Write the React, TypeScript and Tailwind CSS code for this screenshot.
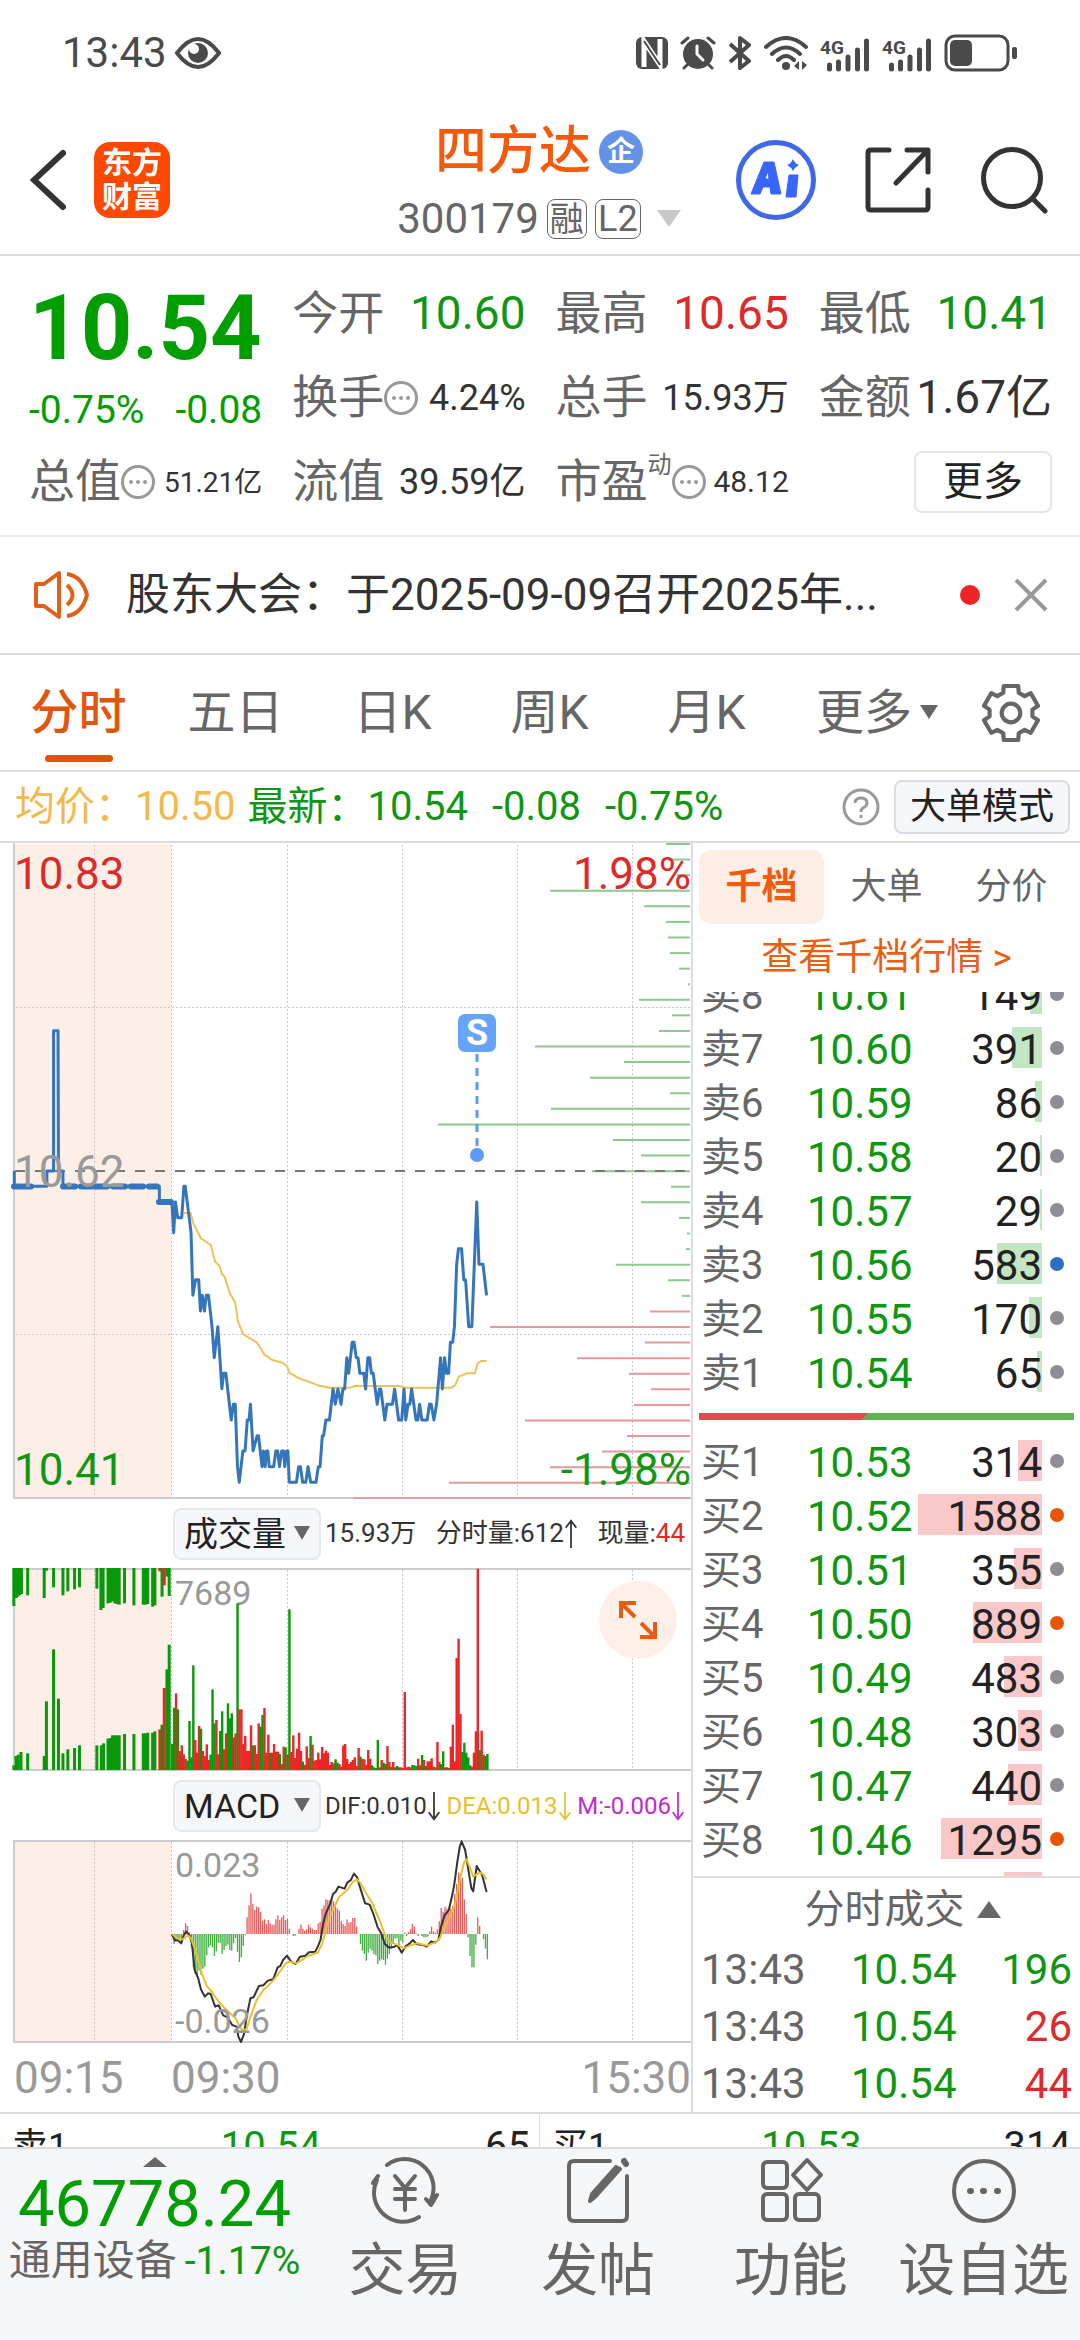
import React from "react";

type Level = { label: string; price: string; qty: number; dot: "gray" | "blue" | "orange" };

const sells: Level[] = [
    { label: "卖8", price: "10.61", qty: 149, dot: "gray" },
    { label: "卖7", price: "10.60", qty: 391, dot: "gray" },
    { label: "卖6", price: "10.59", qty: 86, dot: "gray" },
    { label: "卖5", price: "10.58", qty: 20, dot: "gray" },
    { label: "卖4", price: "10.57", qty: 29, dot: "gray" },
    { label: "卖3", price: "10.56", qty: 583, dot: "blue" },
    { label: "卖2", price: "10.55", qty: 170, dot: "gray" },
    { label: "卖1", price: "10.54", qty: 65, dot: "gray" },
];

const buys: Level[] = [
    { label: "买1", price: "10.53", qty: 314, dot: "gray" },
    { label: "买2", price: "10.52", qty: 1588, dot: "orange" },
    { label: "买3", price: "10.51", qty: 355, dot: "gray" },
    { label: "买4", price: "10.50", qty: 889, dot: "orange" },
    { label: "买5", price: "10.49", qty: 483, dot: "gray" },
    { label: "买6", price: "10.48", qty: 303, dot: "gray" },
    { label: "买7", price: "10.47", qty: 440, dot: "gray" },
    { label: "买8", price: "10.46", qty: 1295, dot: "orange" },
];

const trades = [
    { time: "13:43", price: "10.54", qty: "196", up: false },
    { time: "13:43", price: "10.54", qty: "26", up: true },
    { time: "13:43", price: "10.54", qty: "44", up: true },
];

const dotColors = { gray: "bg-[#8e8d93]", blue: "bg-[#2b6fc4]", orange: "bg-[#ea5504]" };

// 千档挂单：每一档对应一条横线，值为横线左端 x
const askDepth = [
    666, 668, 677, 550, 644, 666, 668, 670, 679, 688, 639, 672, 659, 535, 624, 590, 670, 551, 438, 613, 641,
    592, 671, 641, 679, 687, 686, 616, 668, 682,
];
const bidDepth = [650, 490, 645, 577, 629, 651, 634, 525, 627, 602, 550, 449, 353];

const priceLine =
    "32,33 32,79 105,79 105,33 120,33 120,-388 130,-388 131,33 141,33 141,79 357,79 357,126 385,126 389,218 393,126 398,173 407,173 412,79 415,79 428,218 432,406 438,359 445,359 449,453 453,406 458,453 462,406 467,406 475,500 480,593 488,500 497,686 501,640 506,640 518,780 523,733 527,733 532,920 536,967 544,873 549,873 554,780 558,780 561,733 567,873 576,827 579,827 587,920 590,873 594,920 597,873 600,873 603,920 613,920 618,873 622,873 626,920 631,873 635,873 638,920 642,873 645,873 648,967 664,967 669,920 673,920 678,967 685,967 690,920 696,967 708,967 713,920 717,920 722,827 725,827 730,780 738,780 746,687 751,733 757,687 764,733 768,687 772,687 777,593 781,640 789,547 793,547 798,593 802,593 806,640 815,640 819,687 824,593 828,593 832,640 836,640 845,733 850,687 853,687 862,780 867,733 879,733 884,687 893,780 900,780 905,687 909,780 914,733 918,733 922,687 932,780 936,780 940,733 945,780 957,780 962,733 966,733 972,780 978,733 987,593 991,687 996,593 1000,640 1005,640 1009,547 1014,547 1018,500 1023,313 1027,266 1034,266 1039,360 1043,360 1050,500 1057,500 1068,126 1073,313 1082,313 1090,406";
const avgLine =
    "412,159 427,159 433,190 450,235 472,255 482,305 492,318 497,342 503,350 515,400 527,428 533,485 545,523 575,547 592,583 610,600 632,608 643,618 648,638 670,655 715,677 740,683 785,683 795,678 895,678 905,683 1012,683 1020,675 1028,650 1045,640 1064,640 1070,610 1078,603 1090,603";
const difLine =
    "385,462 392,482 398,480 406,490 412,465 417,455 425,468 430,490 436,570 444,595 450,628 459,650 466,640 472,642 482,680 490,676 500,706 510,712 520,735 530,740 534,770 540,786 546,765 554,700 561,655 568,652 580,618 590,616 600,602 612,598 622,562 628,558 634,540 643,527 652,545 662,552 672,530 684,527 692,517 706,515 712,500 718,480 724,430 730,400 740,370 746,342 752,335 758,320 772,326 778,308 786,300 793,281 800,292 806,320 818,370 828,374 836,400 846,442 854,460 862,492 872,503 884,500 890,495 900,518 908,500 918,490 925,480 934,493 944,494 956,500 966,484 974,488 982,480 988,440 996,405 1005,392 1014,340 1018,310 1024,250 1030,200 1034,184 1042,210 1048,260 1056,325 1060,334 1068,258 1074,272 1080,285 1090,336";
const deaLine =
    "385,462 400,478 410,478 420,466 428,475 440,520 452,580 464,620 474,634 484,655 500,680 515,700 528,715 536,738 542,750 552,748 560,715 575,660 590,630 612,602 630,570 640,550 648,545 664,550 690,528 712,518 722,490 734,430 746,390 760,350 778,330 790,306 800,298 808,310 818,335 834,370 850,420 864,470 876,488 890,494 904,505 920,496 936,490 956,497 975,488 985,475 1000,430 1018,380 1030,300 1040,245 1045,238 1052,260 1060,290 1074,278 1082,282 1090,298";

// 每分钟成交量，负数为绿柱
const volumes = [
    -78, -187, 230, -182, 57, 74, 47, 33, -28, -147, -38, -314, 90, 52, 132, -124, 57, 42, 77, 30, -46, -242, -140, 150, 47,
    -117, -176, 62, 110, -200, -155, -170, 98, 110, -500, 182, 182, 78, 102, 57, 57, 134, -74, 74, 48, 140, -130, -165, 186,
    52, 106, -52, 52, 78, 55, 55, -48, 18, 70, -68, 46, -482, 54, 104, 36, 64, 112, 57, -25, 15, 71, 36, -102, 76, 28, 30,
    52, 32, 69, 50, 58, 52, 15, 24, 20, -32, -22, 18, 10, 73, 78, 33, 18, 24, 30, 38, 12, 66, -40, 33, 32, 16, 60, 34, -14,
    -8, -6, -90, 8, 30, -22, -18, 72, 24, -10, 24, 8, -12, -8, 8, 6, 234, 8, 10, 8, -15, -14, -12, 34, 14, -45, 30, -12, 26,
    26, 35, 10, -8, 84, 24, -18, -56, 8, 8, -6, 70, 136, 26, 336, 394, 168, -54, -82, -52, -38, -14, 10, 52, 116, 604, -60,
    118, 46, -42, -48,
];

// 集合竞价 [x, 高度]
const auctionTop = [
    [31, -114], [36, -90], [40, -86], [44, -82], [48, -78], [62, -82], [99, -90], [104, -8], [120, -58], [141, -82],
    [152, -70], [167, -64], [178, -58], [217, -62], [226, -126], [231, -120], [242, -106], [247, -104], [252, -100],
    [257, -106], [262, -108], [267, -110], [279, -106], [300, -112], [321, -110], [326, -110], [331, -108], [342, -116],
    [347, -112], [358, 10], [363, -86], [368, 52], [374, -26], [379, -84],
];
const auctionBottom = [
    [31, -14], [36, -42], [41, -46], [47, -54], [62, -50], [99, -42], [104, -206], [120, -362], [131, -214], [141, -50],
    [152, -62], [167, -66], [178, -74], [217, -74], [227, -74], [232, -80], [242, -94], [247, -96], [252, -104],
    [257, -104], [262, -104], [267, -104], [279, -108], [300, -108], [321, -110], [326, -110], [331, -112], [342, -112],
    [347, -116], [358, 122], [363, -136], [368, 246], [374, -302], [379, -376],
];

const macdBars = [
    -8, -30, -20, -22, -14, -26, 12, 32, 24, 5, -40, -100, -120, -124, -110, -122, -104, -98, -64, -40, -34, -40, -66, -52,
    -26, -26, -60, -48, -36, -32, -48, -50, -28, -12, -54, -84, -70, -36, -4, 50, 86, 122, 90, 72, 82, 80, 66, 40, 44, 30,
    42, 32, 28, 28, 44, 56, 42, 50, 56, 42, 46, 16, 0, -6, -5, 0, 16, 28, 16, 10, 14, 28, 20, 16, 12, 12, 32, 36, 76, 86,
    104, 102, 100, 108, 98, 82, 76, 70, 38, 30, 24, 44, 34, 36, 48, 48, 22, 0, -30, -50, -60, -80, -56, -44, -50, -60, -64,
    -90, -80, -76, -78, -92, -74, -60, -44, -28, -14, -12, -36, -20, -26, 4, -6, 6, 14, 30, 22, 2, -6, 0, -6, -10, -10, -8,
    8, 22, 8, 4, 14, 38, 78, 66, 82, 76, 66, 76, 84, 120, 150, 184, 180, 168, 104, 60, -10, -66, -100, -100, -32, 50, 24, 0,
    -16, -44, -76,
];

const gearPoints = Array.from({ length: 6 })
    .flatMap((_, i) =>
        [[-21, 21], [-15, 27], [15, 27], [21, 21]].map(([deg, r]) => {
            const a = ((i * 60 - 90 + deg) * Math.PI) / 180;
            return `${(29 + r * Math.cos(a)).toFixed(1)},${(29 + r * Math.sin(a)).toFixed(1)}`;
        })
    )
    .join(" ");

const StatusBar: React.FC = () => (
    <div className="flex h-[105px] items-center justify-between pl-[62px] pr-[62px] text-[#4a4a4a]">
        <div className="flex items-center gap-2">
            <span className="text-[42px] leading-[48px]">13:43</span>
            <svg className="h-8 w-[46px]" viewBox="0 0 46 32" fill="none">
                <path d="M2 16 Q23 -12 44 16 Q23 44 2 16 Z" stroke="currentColor" strokeWidth="4" />
                <circle cx="23" cy="16" r="10" fill="currentColor" />
                <circle cx="19" cy="12" r="5" fill="#fff" />
            </svg>
        </div>
        <div className="flex items-center gap-3">
            <svg className="h-8 w-8" viewBox="0 0 32 32">
                <rect x="0" y="0" width="32" height="32" rx="6" fill="currentColor" />
                <path d="M8 30 V4 L24 28 V2" fill="none" stroke="#fff" strokeWidth="5" />
                <path d="M8 4 L24 28" stroke="currentColor" strokeWidth="2" />
            </svg>
            <svg className="h-[34px] w-9" viewBox="0 0 36 34" fill="none" stroke="currentColor" strokeWidth="4" strokeLinecap="round">
                <circle cx="18" cy="18" r="15" fill="currentColor" stroke="none" />
                <path d="M2 7 L8 2 M34 7 L28 2 M7 29 L4 32 M29 29 L32 32" strokeWidth="3" />
                <path d="M17 10 V18 L23 24" stroke="#fff" strokeWidth="3" />
            </svg>
            <svg className="h-[34px] w-6" viewBox="0 0 24 34" fill="none" stroke="currentColor" strokeWidth="4" strokeLinejoin="round">
                <path d="M2 8 L21 25 L12 32 V2 L21 9 L2 26" />
            </svg>
            <svg className="h-[34px] w-11" viewBox="0 0 44 34" fill="none" stroke="currentColor" strokeWidth="4" strokeLinecap="round">
                <path d="M2 11 Q22 -7 42 11 M8 18 Q22 5 36 18 M14 24 Q22 16 30 24" />
                <circle cx="22" cy="30" r="4" fill="currentColor" stroke="none" />
                <path d="M35 25 V34 L30 30 Z M38 34 V25 L43 29 Z" fill="currentColor" stroke="none" />
            </svg>
            <Signal />
            <Signal />
            <svg className="h-[38px] w-[74px]" viewBox="0 0 74 38" fill="none">
                <rect x="2" y="2" width="62" height="34" rx="9" stroke="currentColor" strokeWidth="3" />
                <rect x="6" y="6" width="22" height="26" rx="5" fill="currentColor" />
                <rect x="68" y="13" width="5" height="12" rx="2" fill="currentColor" />
            </svg>
        </div>
    </div>
);

const Signal: React.FC = () => (
    <svg className="h-[38px] w-[50px] overflow-visible" viewBox="0 -4 50 38">
        <text x="0" y="16" fontSize="19" fontWeight="700" fill="currentColor">4G</text>
        <path d="M9.500 27 V31 M18.500 24 V31 M28 19 V31 M37.500 12 V31 M46.500 3 V31" stroke="currentColor" strokeWidth="5" strokeLinecap="round" />
    </svg>
);

const Header: React.FC = () => (
    <header className="grid h-[151px] grid-cols-[1fr_auto_1fr] items-center border-b-2 border-[#dcdcdc] pl-[30px] pr-8">
        <div className="flex items-center gap-7">
            <button aria-label="返回">
                <svg className="h-[62px] w-9" viewBox="0 0 36 62" fill="none" stroke="#333" strokeWidth="6" strokeLinecap="round">
                    <path d="M33 4 L4 31 L33 58" />
                </svg>
            </button>
            <div className="flex h-[76px] w-[76px] flex-col items-center justify-center rounded-2xl bg-[#ff4800] text-[30px] font-bold leading-[34px] text-white">
                <span>东方</span>
                <span>财富</span>
            </div>
        </div>
        <div className="flex flex-col items-center pt-2">
            <div className="flex h-[70px] items-center gap-2">
                <h1 className="text-[52px] leading-[70px] font-medium text-[#f25a0d]">四方达</h1>
                <span className="flex h-11 w-11 items-center justify-center rounded-full bg-[#6492e8] text-[28px] font-bold leading-none text-white">企</span>
            </div>
            <div className="flex h-16 items-center gap-2 text-[#666]">
                <span className="text-[42px] leading-[48px]">300179</span>
                <span className="flex h-10 w-10 items-center justify-center rounded-lg border border-[#666] text-[34px] leading-none">融</span>
                <span className="flex h-10 w-[46px] items-center justify-center rounded-lg border border-[#666] text-[36px] leading-none">L2</span>
                <svg className="ml-2 h-[18px] w-6" viewBox="0 0 24 18">
                    <path d="M0 0 H24 L12 17 Z" fill="#c8c8c8" />
                </svg>
            </div>
        </div>
        <div className="flex items-center justify-end gap-[49px]">
            <button aria-label="AI">
                <svg className="h-20 w-20" viewBox="0 0 80 80">
                    <circle cx="40" cy="40" r="37.500" fill="none" stroke="#3f68e8" strokeWidth="5" />
                    <path d="M15 54 L28 22 H38 L45 54 H35 L34 47 H27 L24 54 Z M29 39 H33 L32 31 Z" fill="#3666ff" fillRule="evenodd" stroke="#3666ff" strokeWidth="1" strokeLinejoin="round" />
                    <path d="M53 35 H62 L60 57 H50 Z" fill="#3666ff" stroke="#3666ff" strokeWidth="1" strokeLinejoin="round" />
                    <path d="M57 19 Q59 24 63 25 Q59 27 57 31 Q55 27 51 25 Q55 24 57 19 Z" fill="#3666ff" />
                </svg>
            </button>
            <button aria-label="分享">
                <svg className="h-[66px] w-[66px]" viewBox="0 0 66 66" fill="none" stroke="#333" strokeWidth="5" strokeLinecap="round" strokeLinejoin="round">
                    <path d="M24 3 H6 Q3 3 3 6 V60 Q3 63 6 63 H60 Q63 63 63 60 V43" />
                    <path d="M42 3 H63 V25 M61 5 L31 36" />
                </svg>
            </button>
            <button aria-label="搜索">
                <svg className="h-[68px] w-[68px]" viewBox="0 0 68 68" fill="none" stroke="#333" strokeWidth="5" strokeLinecap="round">
                    <circle cx="32" cy="32" r="28.500" />
                    <path d="M53 53 L65 65" />
                </svg>
            </button>
        </div>
    </header>
);

const More: React.FC = () => (
    <svg className="h-[34px] w-[34px] shrink-0" viewBox="0 0 34 34" fill="#999">
        <circle cx="17" cy="17" r="15.500" fill="none" stroke="#999" strokeWidth="3" />
        <circle cx="10" cy="17" r="2" />
        <circle cx="17" cy="17" r="2" />
        <circle cx="24" cy="17" r="2" />
    </svg>
);

const Stat: React.FC<{ label: string; more?: boolean; sup?: string; children: React.ReactNode }> = ({ label, more, sup, children }) => (
    <div className="flex h-[84px] items-center justify-between whitespace-nowrap">
        <span className="flex items-center text-[46px] text-[#666]">
            <span>{label}{sup && <sup className="-top-6 text-[24px]">{sup}</sup>}</span>
            {more && <More />}
        </span>
        {children}
    </div>
);

const Quote: React.FC = () => (
    <section className="grid h-[281px] grid-cols-4 content-start gap-x-[30px] border-b-2 border-[#eee] pl-[29px] pr-7 pt-4">
        <div className="row-span-2 flex h-[168px] flex-col text-[#009e00]">
            <span className="pt-3 text-[90px] font-bold leading-[90px]">10.54</span>
            <div className="flex justify-between pt-3 text-[39px] leading-[48px]">
                <span>-0.75%</span>
                <span>-0.08</span>
            </div>
        </div>
        <Stat label="今开"><span className="text-[46px] text-[#0f9612]">10.60</span></Stat>
        <Stat label="最高"><span className="text-[46px] text-[#dd2a2a]">10.65</span></Stat>
        <Stat label="最低"><span className="text-[46px] text-[#0f9612]">10.41</span></Stat>
        <Stat label="换手" more><span className="text-[36px] text-[#333]">4.24%</span></Stat>
        <Stat label="总手"><span className="text-[36px] text-[#333]">15.93万</span></Stat>
        <Stat label="金额"><span className="text-[46px] text-[#333]">1.67亿</span></Stat>
        <Stat label="总值" more><span className="text-[28px] text-[#333]">51.21亿</span></Stat>
        <Stat label="流值"><span className="text-[36px] text-[#333]">39.59亿</span></Stat>
        <Stat label="市盈" sup="动" more><span className="text-[30px] text-[#333]">48.12</span></Stat>
        <div className="flex h-[84px] items-center justify-end">
            <button className="h-[62px] w-[138px] rounded-lg border-2 border-[#e6e6e6] text-[40px] leading-none text-[#222]">更多</button>
        </div>
    </section>
);

const Notice: React.FC = () => (
    <div className="flex h-[118px] items-center border-b-2 border-[#dcdcdc] pl-8 pr-8">
        <svg className="h-[50px] w-[58px] shrink-0" viewBox="0 0 58 50" fill="none" stroke="#e0601a" strokeWidth="4" strokeLinejoin="round">
            <path d="M4 14 H12 L27 3 V47 L12 36 H4 Z" />
            <path d="M35 15 Q46 25 35 35 M35 4 Q50 6 55 25 Q50 44 35 46" />
        </svg>
        <a href="#notice" className="ml-9 min-w-0 flex-1 truncate text-[44px] leading-[64px] text-[#333]">股东大会：于2025-09-09召开2025年...</a>
        <span className="mr-[34px] h-5 w-5 rounded-full bg-[#f02424]" />
        <button aria-label="关闭">
            <svg className="h-[34px] w-[34px]" viewBox="0 0 34 34" stroke="#999" strokeWidth="4">
                <path d="M2 2 L32 32 M32 2 L2 32" />
            </svg>
        </button>
    </div>
);

const Tabs: React.FC = () => (
    <nav className="grid h-[117px] grid-cols-[repeat(6,157fr)_138fr] border-b-2 border-[#dcdcdc] text-[48px] text-[#666]">
        <button className="relative font-medium text-[#e0560c]">
            分时
            <span className="absolute bottom-2 left-1/2 h-[7px] w-[68px] -translate-x-1/2 rounded-full bg-[#e65300]" />
        </button>
        <button>五日</button>
        <button>日K</button>
        <button>周K</button>
        <button>月K</button>
        <button className="flex items-center justify-center gap-2 pl-[27px]">
            更多
            <svg className="h-[15px] w-[18px]" viewBox="0 0 18 15"><path d="M0 0 H18 L9 14 Z" fill="#666" /></svg>
        </button>
        <button aria-label="设置" className="flex items-center justify-center">
            <svg className="h-[60px] w-[60px]" viewBox="0 0 58 58" fill="none" stroke="#666" strokeWidth="4" strokeLinejoin="round">
                <polygon points={gearPoints} />
                <circle cx="29" cy="29" r="9" />
            </svg>
        </button>
    </nav>
);

const InfoBar: React.FC = () => (
    <div className="flex h-[71px] items-center border-b-2 border-[#dcdcdc] pl-[15px] pr-[10px] text-[40px] leading-[56px] text-[#0f9612]">
        <span className="text-[#f3b94a]">均价：10.50</span>
        <span className="ml-3">最新：10.54</span>
        <span className="ml-6">-0.08</span>
        <span className="ml-6">-0.75%</span>
        <button aria-label="帮助" className="ml-auto">
            <svg className="h-[38px] w-[38px]" viewBox="0 0 38 38" fill="none" stroke="#999" strokeWidth="3">
                <circle cx="19" cy="19" r="17" />
                <path d="M13 15 Q13 10 19 10 Q25 10 25 15 Q25 18 21 20 Q19 21 19 24 M19 27 V30" />
            </svg>
        </button>
        <button className="ml-[14px] h-[54px] rounded-lg border-2 border-[#d9dce2] bg-[#f6f7fa] px-[14px] text-[36px] leading-none text-[#222]">大单模式</button>
    </div>
);

const GridLines: React.FC<{ height: number }> = ({ height }) => (
    <g>
        <rect x="15" y="1" width="156" height={height - 2} fill="#fdeee8" />
        {[94.5, 171.5, 287.5, 402.5, 517.5, 632.5].map((x) => (
            <line key={x} x1={x} x2={x} y1="2" y2={height} stroke="#c8c8c8" strokeDasharray="2 2" />
        ))}
        <path d={`M14 0 V${height - 1} H691`} fill="none" stroke="#ccc" strokeWidth="2" />
    </g>
);

const PriceChart: React.FC = () => (
    <svg className="block w-full" viewBox="0 0 691 656">
        <GridLines height={656} />
        <path d="M16 164.500 H690 M16 491.500 H690" stroke="#c8c8c8" strokeDasharray="2 2" />
        {askDepth.map((x, i) => (
            <line key={i} x1={x} x2="690" y1={1 + i * 15.58} y2={1 + i * 15.58} stroke="#8cc98c" strokeWidth="2" />
        ))}
        {bidDepth.map((x, i) => (
            <line key={i} x1={x} x2="690" y1={1 + (i + 30) * 15.58} y2={1 + (i + 30) * 15.58} stroke="#e39a9a" strokeWidth="2" />
        ))}
        <path d="M15 328 H690" stroke="#777" strokeWidth="2" strokeDasharray="10 10" />
        <g transform="translate(0 317) scale(0.4464 0.3333)" fill="none" strokeLinejoin="round">
            <polyline points={avgLine} stroke="#f0c05a" strokeWidth="2" vectorEffect="non-scaling-stroke" />
            <polyline points={priceLine} stroke="#3575bb" strokeWidth="3" vectorEffect="non-scaling-stroke" />
        </g>
        <path d="M14 343.500 H22 M24 343.500 H31 M63 343.500 H92 M95 343.500 H157 M159 359 H171" stroke="#3575bb" strokeWidth="6" strokeLinecap="round" strokeDasharray="12 6" />
        <path d="M477 211 V306" fill="none" stroke="#5b9bf5" strokeWidth="3" strokeDasharray="8 6" />
        <circle cx="477" cy="312" r="7" fill="#5b9bf5" />
        <rect x="458" y="171" width="38" height="38" rx="7" fill="#66a3fb" />
        <text x="477" y="202" fontSize="36" fontWeight="700" textAnchor="middle" fill="#fff">S</text>
        <text x="14" y="46" fontSize="44" fill="#dd2a2a">10.83</text>
        <text x="691" y="46" fontSize="44" textAnchor="end" fill="#dd2a2a">1.98%</text>
        <text x="14" y="344" fontSize="44" fill="#999">10.62</text>
        <text x="14" y="642" fontSize="44" fill="#0f9612">10.41</text>
        <text x="691" y="642" fontSize="44" textAnchor="end" fill="#0f9612">-1.98%</text>
    </svg>
);

const barColor = (v: number) => (v < 0 ? "#08990a" : "#ec2626");

const VolumeChart: React.FC = () => (
    <div className="relative">
        <svg className="block w-full" viewBox="0 0 691 203">
            <GridLines height={203} />
            <path d="M14 1 H691" stroke="#ccc" strokeWidth="2" />
            <text x="175" y="37" fontSize="34" fill="#999">7689</text>
            {auctionTop.map(([x, v], i) => (
                <rect key={i} x={x * 0.4464 - 1.5} y="0" width="3" height={Math.abs(v) / 3} fill={barColor(v)} />
            ))}
            {auctionBottom.map(([x, v], i) => (
                <rect key={i} x={x * 0.4464 - 1.5} y={202 - Math.abs(v) / 3} width="3" height={Math.abs(v) / 3} fill={barColor(v)} />
            ))}
            {volumes.map((v, i) => (
                <rect key={i} x={171 + i * 1.922} y={202 - Math.abs(v) / 3} width="2.400" height={Math.abs(v) / 3} fill={barColor(v)} />
            ))}
        </svg>
        <button aria-label="展开" className="absolute right-[14px] top-[13px] flex h-[78px] w-[78px] items-center justify-center rounded-full bg-[#fef0e8]">
            <svg className="h-10 w-10" viewBox="0 0 40 40" fill="none" stroke="#e65c10" strokeWidth="4">
                <path d="M3 18 V3 H18 M3 3 L17 17 M37 22 V37 H22 M37 37 L23 23" />
            </svg>
        </button>
    </div>
);

const MacdChart: React.FC = () => (
    <svg className="block w-full" viewBox="0 0 691 203">
        <GridLines height={203} />
        <path d="M14 1 H691" stroke="#ccc" strokeWidth="2" />
        {macdBars.map((v, i) => (
            <rect key={i} x={171.5 + i * 1.922} y={v > 0 ? 94 - v / 3 : 94} width="1.300" height={Math.abs(v) / 3} fill={v < 0 ? "#3fae3f" : "#e85a5a"} />
        ))}
        <g transform="translate(0 -60) scale(0.4464 0.3333)" fill="none" strokeLinejoin="round">
            <polyline points={difLine} stroke="#333" strokeWidth="2" vectorEffect="non-scaling-stroke" />
            <polyline points={deaLine} stroke="#e8c02c" strokeWidth="2" vectorEffect="non-scaling-stroke" />
        </g>
        <text x="175" y="37" fontSize="34" fill="#999">0.023</text>
        <text x="175" y="193" fontSize="34" fill="#999">-0.026</text>
    </svg>
);

const Arrow: React.FC<{ up?: boolean }> = ({ up }) => (
    <svg className="inline-block h-[30px] w-[14px]" viewBox="0 0 14 34" fill="none" stroke="currentColor" strokeWidth="2">
        <path d={up ? "M7 33 V2 M1 10 L7 2 L13 10" : "M7 1 V32 M1 24 L7 32 L13 24"} />
    </svg>
);

const IndicatorButton: React.FC<{ children: React.ReactNode }> = ({ children }) => (
    <button className="flex h-[52px] w-[148px] shrink-0 items-center justify-between rounded-lg border-2 border-[#e6e8ec] bg-[#f6f7fa] px-[9px] text-[34px] leading-none text-[#222]">
        {children}
        <svg className="h-[15px] w-4" viewBox="0 0 16 15"><path d="M0 0 H16 L8 14 Z" fill="#666" /></svg>
    </button>
);

const Charts: React.FC = () => (
    <div className="min-w-0 border-r-2 border-[#dcdcdc]">
        <PriceChart />
        <div className="flex h-[69px] items-center whitespace-nowrap pl-[173px] pr-[6px] text-[26px] text-[#333]">
            <IndicatorButton>成交量</IndicatorButton>
            <div className="flex flex-1 items-center justify-between pl-1">
                <span>15.93万</span>
                <span className="flex items-center">分时量:612<Arrow up /></span>
                <span>现量:<span className="text-[#dd2a2a]">44</span></span>
            </div>
        </div>
        <VolumeChart />
        <div className="flex h-[69px] items-center whitespace-nowrap pl-[173px] pr-[6px] text-[#333]">
            <IndicatorButton>MACD</IndicatorButton>
            <div className="flex flex-1 items-center justify-between pl-1 text-[24px]">
                <span className="flex items-center">DIF:0.010<Arrow /></span>
                <span className="flex items-center text-[#e8c02c]">DEA:0.013<Arrow /></span>
                <span className="flex items-center text-[#c22bcb]">M:-0.006<Arrow /></span>
            </div>
        </div>
        <MacdChart />
        <div className="flex h-[69px] items-center pl-[14px] text-[44px] leading-none text-[#999]">
            <span className="w-[157px]">09:15</span>
            <span>09:30</span>
            <span className="ml-auto">15:30</span>
        </div>
    </div>
);

const LevelRow: React.FC<{ level: Level; side: "buy" | "sell" }> = ({ level, side }) => (
    <div className="relative flex h-[54px] shrink-0 items-center pl-2 pr-4 text-[42px] leading-[54px]">
        <span
            className={side === "buy" ? "absolute right-[38px] top-1 h-[41px] bg-[#fac8c8]" : "absolute right-[38px] top-1 h-[41px] bg-[#c2e6c2]"}
            style={{ width: Math.max(1, Math.round(level.qty * 0.078)) }}
        />
        <span className="w-[106px] text-[40px] text-[#666]">{level.label}</span>
        <span className="text-[#0f9612]">{level.price}</span>
        <span className="relative ml-auto mr-2 text-[#222]">{level.qty}</span>
        <span className={`mb-1 h-[14px] w-[14px] rounded-full ${dotColors[level.dot]}`} />
    </div>
);

const OrderBook: React.FC = () => (
    <aside className="flex min-w-0 flex-col">
        <div className="flex px-[6px] pt-[7px] text-[36px] leading-[74px] text-[#666]">
            <button className="flex-1 rounded-xl bg-[#feeee6] font-bold text-[#f55a0a]">千档</button>
            <button className="flex-1">大单</button>
            <button className="flex-1">分价</button>
        </div>
        <a href="#levels" className="h-[68px] text-center text-[37px] leading-[68px] text-[#e85f14]">查看千档行情 &gt;</a>
        <div className="flex h-[409px] flex-col justify-end overflow-hidden">
            {sells.map((l) => <LevelRow key={l.label} level={l} side="sell" />)}
        </div>
        <div className="mx-[6px] mb-4 mt-3 flex h-[7px] bg-[#5fb54c]">
            <span className="w-[45%] bg-[#e04b4b] [clip-path:polygon(0_0,100%_0,calc(100%-6px)_100%,0_100%)]" />
        </div>
        <div className="h-[440px] overflow-hidden">
            {buys.map((l) => <LevelRow key={l.label} level={l} side="buy" />)}
            <div className="flex justify-end pr-[38px] pt-1">
                <span className="h-[41px] w-[38px] bg-[#fac8c8]" />
            </div>
        </div>
        <button className="flex h-[65px] items-center justify-center gap-3 border-t-2 border-[#dcdcdc] pl-8 text-[40px] leading-none text-[#666]">
            分时成交
            <svg className="h-[17px] w-6" viewBox="0 0 24 17"><path d="M12 0 L24 17 H0 Z" fill="#666" /></svg>
        </button>
        <table className="w-full text-[42px] leading-[57px]">
            <tbody>
                {trades.map((t) => (
                    <tr key={t.qty}>
                        <td className="w-[158px] pl-2 text-[#666]">{t.time}</td>
                        <td className="text-[#0f9612]">{t.price}</td>
                        <td className={t.up ? "pr-2 text-right text-[#dd2a2a]" : "pr-2 text-right text-[#0f9612]"}>{t.qty}</td>
                    </tr>
                ))}
            </tbody>
        </table>
    </aside>
);

const BestPrices: React.FC = () => (
    <div className="grid h-[35px] grid-cols-2 overflow-hidden border-t-2 border-[#dcdcdc] text-[40px] leading-[66px] text-[#222]">
        {[["卖1", "10.54", "65"], ["买1", "10.53", "314"]].map(([label, price, qty]) => (
            <div key={label} className="flex justify-between border-r border-[#dcdcdc] pl-3 pr-[9px] last:border-r-0">
                <span className="w-[120px] text-[36px]">{label}</span>
                <span className="text-[#0f9612]">{price}</span>
                <span className="w-[120px] text-right">{qty}</span>
            </div>
        ))}
    </div>
);

const BottomBar: React.FC = () => {
    const items = [
        {
            label: "交易",
            icon: (
                <>
                    <path d="M16 9 A29 29 0 0 1 60 44 M48 61 A29 29 0 0 1 6 24 M2 27 L7 20 M55 43 L60 49 L66 39" />
                    <path d="M24 20 L34 32 L44 20 M34 32 V54 M24 33 H44 M24 43 H44" />
                </>
            ),
        },
        {
            label: "发帖",
            icon: (
                <>
                    <path d="M46 5 H10 Q5 5 5 10 V60 Q5 65 10 65 H58 Q63 65 63 60 V20" />
                    <path d="M60 5 L62 8" strokeWidth="6" />
                    <path d="M56 13 L31 41 L26 45 L28 38 L52 11 Z" fill="#666" />
                </>
            ),
        },
        {
            label: "功能",
            icon: (
                <>
                    <rect x="6" y="6" width="24" height="26" rx="4" />
                    <rect x="6" y="38" width="24" height="26" rx="4" />
                    <rect x="38" y="38" width="24" height="26" rx="4" />
                    <path d="M50 4 L64 19 L50 34 L36 19 Z" />
                </>
            ),
        },
        {
            label: "设自选",
            icon: (
                <>
                    <circle cx="34" cy="35" r="30" />
                    <path d="M20 35 H21 M33 35 H34 M47 35 H48" strokeWidth="6" />
                </>
            ),
        },
    ];

    return (
        <footer className="flex h-[193px] border-t-2 border-[#dcdcdc] bg-[#f6f7f9]">
            <button className="flex w-[309px] flex-col items-center whitespace-nowrap pt-2">
                <svg className="h-[10px] w-6" viewBox="0 0 24 10"><path d="M12 0 L24 10 H0 Z" fill="#666" /></svg>
                <span className="text-[65px] leading-[74px] text-[#009e00]">46778.24</span>
                <span className="flex items-center gap-2 text-[42px] leading-[40px] text-[#666]">
                    通用设备
                    <span className="text-[39px] text-[#0f9612]">-1.17%</span>
                </span>
            </button>
            {items.map((item) => (
                <button key={item.label} className="flex flex-1 flex-col items-center whitespace-nowrap pt-[7px] text-[57px] leading-[90px] text-[#666]">
                    <svg className="h-[70px] w-[68px] shrink-0" viewBox="0 0 68 70" fill="none" stroke="#666" strokeWidth="4" strokeLinecap="round" strokeLinejoin="round">
                        {item.icon}
                    </svg>
                    {item.label}
                </button>
            ))}
        </footer>
    );
};

export default function App() {
    return (
        <div className="min-h-screen bg-white font-['Roboto','Noto_Sans_CJK_SC',sans-serif] leading-tight">
            <StatusBar />
            <Header />
            <Quote />
            <Notice />
            <Tabs />
            <InfoBar />
            <main className="grid grid-cols-[693fr_387fr]">
                <Charts />
                <OrderBook />
            </main>
            <BestPrices />
            <BottomBar />
        </div>
    );
}
